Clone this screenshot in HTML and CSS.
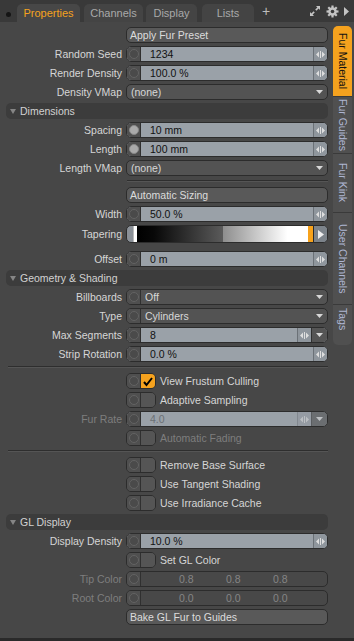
FILE: index.html
```html
<!DOCTYPE html>
<html lang="en">
<head>
  <meta charset="UTF-8">
  <title>Fur Material Properties</title>
  <link rel="stylesheet" href="styles.css">
</head>
<body>
  <!-- tab bar -->
  <div class="topbar">
    <span class="dot"></span>
    <div class="tab active w-prop">Properties</div>
    <div class="tab w-chan">Channels</div>
    <div class="tab w-disp">Display</div>
    <div class="tab w-list">Lists</div>
    <span class="plus">+</span>
    <div class="tools">
      <svg width="12" height="12" viewBox="0 0 12 12">
        <path d="M7 1 H11 V5 L9.6 3.6 L7.4 5.8 L6.2 4.6 L8.4 2.4 Z" fill="#c4c4c4"/>
        <path d="M5 11 H1 V7 L2.4 8.4 L4.6 6.2 L5.8 7.4 L3.6 9.6 Z" fill="#c4c4c4"/>
      </svg>
      <svg width="13" height="13" viewBox="0 0 13 13">
        <g fill="#c4c4c4">
          <circle cx="6.5" cy="6.5" r="4.3"/>
          <rect x="5.4" y="0.5" width="2.2" height="12"/>
          <rect x="0.5" y="5.4" width="12" height="2.2"/>
          <rect x="5.4" y="0.5" width="2.2" height="12" transform="rotate(45 6.5 6.5)"/>
          <rect x="5.4" y="0.5" width="2.2" height="12" transform="rotate(-45 6.5 6.5)"/>
        </g>
        <circle cx="6.5" cy="6.5" r="1.8" fill="#3a3a3a"/>
      </svg>
      <svg width="6" height="9" viewBox="0 0 6 9"><path d="M0 0 L5 4.5 L0 9 Z" fill="#c4c4c4"/></svg>
    </div>
  </div>

  <div class="main">
    <div class="form">
      <div class="row"><span class="lbl"></span><div class="btn">Apply Fur Preset</div></div>

      <div class="row"><span class="lbl">Random Seed</span>
        <div class="ctl"><span class="knob"><i></i></span><span class="val">1234</span><span class="spin"></span></div></div>
      <div class="row"><span class="lbl">Render Density</span>
        <div class="ctl"><span class="knob"><i></i></span><span class="val">100.0 %</span><span class="spin"></span></div></div>
      <div class="row"><span class="lbl">Density VMap</span>
        <div class="ctl pop"><span class="txt">(none)</span><span class="arr"></span></div></div>

      <div class="head"><span class="tri"></span>Dimensions</div>

      <div class="row"><span class="lbl">Spacing</span>
        <div class="ctl"><span class="knob on"><i></i></span><span class="val">10 mm</span><span class="spin"></span></div></div>
      <div class="row"><span class="lbl">Length</span>
        <div class="ctl"><span class="knob on"><i></i></span><span class="val">100 mm</span><span class="spin"></span></div></div>
      <div class="row"><span class="lbl">Length VMap</span>
        <div class="ctl pop"><span class="txt">(none)</span><span class="arr"></span></div></div>
      <div class="sep short"></div>
      <div class="row"><span class="lbl"></span><div class="btn">Automatic Sizing</div></div>
      <div class="row"><span class="lbl">Width</span>
        <div class="ctl"><span class="knob"><i></i></span><span class="val">50.0 %</span><span class="spin"></span></div></div>
      <div class="row tall"><span class="lbl">Tapering</span>
        <div class="grad">
          <span class="cap"></span><span class="mark"></span>
          <span class="ramp"></span>
          <span class="omark"></span>
          <span class="play"></span>
        </div></div>
      <div class="row"><span class="lbl">Offset</span>
        <div class="ctl"><span class="knob"><i></i></span><span class="val">0 m</span><span class="spin"></span></div></div>

      <div class="head"><span class="tri"></span>Geometry &amp; Shading</div>

      <div class="row"><span class="lbl">Billboards</span>
        <div class="ctl pop"><span class="knob"><i></i></span><span class="txt">Off</span><span class="arr"></span></div></div>
      <div class="row"><span class="lbl">Type</span>
        <div class="ctl pop"><span class="knob"><i></i></span><span class="txt">Cylinders</span><span class="arr"></span></div></div>
      <div class="row"><span class="lbl">Max Segments</span>
        <div class="ctl"><span class="knob"><i></i></span><span class="val">8</span><span class="spin"></span><span class="drop"></span></div></div>
      <div class="row"><span class="lbl">Strip Rotation</span>
        <div class="ctl"><span class="knob"><i></i></span><span class="val">0.0 %</span><span class="spin"></span></div></div>
      <div class="sep"></div>

      <div class="row"><span class="lbl"></span>
        <div class="chk"><span class="knob"><i></i></span><span class="box on"></span></div><span class="ctext">View Frustum Culling</span></div>
      <div class="row"><span class="lbl"></span>
        <div class="chk"><span class="knob"><i></i></span><span class="box"></span></div><span class="ctext">Adaptive Sampling</span></div>
      <div class="row off"><span class="lbl">Fur Rate</span>
        <div class="ctl"><span class="knob"><i></i></span><span class="val">4.0</span><span class="spin"></span><span class="drop"></span></div></div>
      <div class="row off"><span class="lbl"></span>
        <div class="chk"><span class="knob"><i></i></span><span class="box"></span></div><span class="ctext">Automatic Fading</span></div>
      <div class="sep"></div>

      <div class="row"><span class="lbl"></span>
        <div class="chk"><span class="knob"><i></i></span><span class="box"></span></div><span class="ctext">Remove Base Surface</span></div>
      <div class="row"><span class="lbl"></span>
        <div class="chk"><span class="knob"><i></i></span><span class="box"></span></div><span class="ctext">Use Tangent Shading</span></div>
      <div class="row"><span class="lbl"></span>
        <div class="chk"><span class="knob"><i></i></span><span class="box"></span></div><span class="ctext">Use Irradiance Cache</span></div>

      <div class="head"><span class="tri"></span>GL Display</div>

      <div class="row"><span class="lbl">Display Density</span>
        <div class="ctl"><span class="knob"><i></i></span><span class="val">10.0 %</span><span class="spin"></span></div></div>
      <div class="row"><span class="lbl"></span>
        <div class="chk"><span class="knob"><i></i></span><span class="box"></span></div><span class="ctext">Set GL Color</span></div>
      <div class="row off"><span class="lbl">Tip Color</span>
        <div class="ctl pop"><span class="knob"><i></i></span><span class="rgb"><b>0.8</b><b>0.8</b><b>0.8</b></span></div></div>
      <div class="row off"><span class="lbl">Root Color</span>
        <div class="ctl pop"><span class="knob"><i></i></span><span class="rgb"><b>0.0</b><b>0.0</b><b>0.0</b></span></div></div>
      <div class="row"><span class="lbl"></span><div class="btn">Bake GL Fur to Guides</div></div>
    </div>

    <!-- side tabs -->
    <div class="side">
      <div class="stab active t-mat">Fur Material</div>
      <div class="stab t-gui">Fur Guides</div>
      <div class="stab t-kink">Fur Kink</div>
      <div class="stab t-user">User Channels</div>
      <div class="stab t-tags">Tags</div>
    </div>
  </div>
  <div class="bottom"></div>
</body>
</html>
```

FILE: styles.css
```css
* {
  box-sizing: border-box;
}

body {
  margin: 0;
  width: 354px;
  height: 641px;
  overflow: hidden;
  background: #2c2c2c;
  font-family: "Liberation Sans", Arial, sans-serif;
  font-size: 10.5px;
  color: #d6d6d6;
}

/* top tab bar */
.topbar {
  height: 22px;
  background: #393939;
  display: flex;
  align-items: flex-end;
  padding-left: 6px;
}

.dot {
  align-self: center;
  margin-top: 6px;
  width: 5px;
  height: 5px;
  border-radius: 50%;
  background: #151515;
  margin-right: 6px;
}

.tab {
  height: 18px;
  margin-right: 4px;
  border-radius: 5px 5px 0 0;
  background: #444;
  color: #a9a9a9;
  font-size: 11px;
  display: flex;
  align-items: center;
  justify-content: center;
}

.tab.active {
  background: #474747;
  color: #f5a21e;
}

.w-prop { width: 63px; }
.w-chan { width: 59px; margin-right: 3px; }
.w-disp { width: 51px; margin-right: 5px; }
.w-list { width: 52px; }

.plus {
  align-self: center;
  margin-left: 4px;
  color: #bdbdbd;
  font-size: 14px;
  line-height: 14px;
}

.tools {
  align-self: center;
  margin-left: auto;
  display: flex;
  align-items: center;
  gap: 5px;
  padding-right: 4px;
}

/* main panel */
.main {
  height: 616px;
  background: #474747;
  display: flex;
}

.form {
  width: 331px;
  padding: 5px 3px 0 0;
  display: flex;
  flex-direction: column;
  gap: 3px;
}

.row {
  height: 16px;
  display: flex;
  align-items: center;
}

.row.tall {
  height: 18px;
  margin-bottom: 5px;
}

.lbl {
  width: 123px;
  flex: none;
  text-align: right;
  padding-right: 1px;
  margin-right: 3px;
  white-space: nowrap;
}

.off .lbl,
.off .ctext {
  color: #7e7e7e;
}

/* section headers */
.head {
  height: 16px;
  margin-left: 6px;
  background: #3c3c3c;
  border-radius: 5px;
  display: flex;
  align-items: center;
  padding-left: 4px;
  color: #d2d2d2;
}

.tri {
  width: 0;
  height: 0;
  border-left: 3.5px solid transparent;
  border-right: 3.5px solid transparent;
  border-top: 5px solid #858585;
  margin-right: 4px;
}

.sep {
  margin: 1px 0 2px 8px;
  background: #2e2e2e;
  border-bottom: 1px solid #555;
  height: 2px;
}

.sep.short {
  margin-left: 127px;
}

/* fields */
.ctl {
  flex: 1;
  height: 16px;
  display: flex;
  border: 1px solid #2c2c2c;
  border-radius: 5px;
  overflow: hidden;
  background: #9aa1a8;
}

.knob {
  width: 14px;
  flex: none;
  background: #4f4f4f;
  border-right: 1px solid #303030;
  display: flex;
  align-items: center;
  justify-content: center;
}

.knob i {
  width: 10px;
  height: 10px;
  border-radius: 50%;
  border: 1px solid #636363;
  background: #4a4a4a;
}

.knob.on i {
  background: #a9a9a9;
  border-color: #888;
}

.val {
  flex: 1;
  padding-left: 9px;
  color: #111;
  line-height: 14px;
}

.off .val {
  color: #6b7075;
}

.spin {
  width: 14px;
  flex: none;
  background: #8f969d;
  border-left: 1px solid #6b7177;
  background-image: url("data:image/svg+xml;utf8,<svg xmlns='http://www.w3.org/2000/svg' width='9' height='9'><path d='M0 4.5 L3 1.5 L3 7.5 Z M9 4.5 L6 1.5 L6 7.5 Z' fill='%23dedede'/><rect x='4' y='1' width='1' height='7' fill='%23dedede'/></svg>");
  background-repeat: no-repeat;
  background-position: center;
}

.off .spin {
  opacity: 0.5;
}

.drop,
.arr {
  width: 16px;
  flex: none;
  background-repeat: no-repeat;
  background-position: center;
  background-image: url("data:image/svg+xml;utf8,<svg xmlns='http://www.w3.org/2000/svg' width='7' height='4'><path d='M0 0 L7 0 L3.5 4 Z' fill='%23d8d8d8'/></svg>");
}

.drop {
  background-color: #555;
  border-left: 1px solid #303030;
}

.off .drop {
  background-color: #4e4e4e;
  opacity: 0.6;
}

.ctl.pop {
  background: #535353;
}

.txt {
  flex: 1;
  padding-left: 4px;
  line-height: 14px;
  color: #d8d8d8;
}

.rgb {
  flex: 1;
  display: flex;
  padding-left: 38px;
  line-height: 14px;
}

.rgb b {
  width: 47px;
  font-weight: normal;
  color: #858585;
}

.ctl.pop:has(.rgb) {
  background: #484848;
}

/* buttons */
.btn {
  flex: 1;
  height: 16px;
  background: #595959;
  border: 1px solid #2c2c2c;
  border-radius: 5px;
  padding-left: 3px;
  line-height: 14px;
  color: #dcdcdc;
}

/* checkboxes */
.chk {
  width: 30px;
  height: 16px;
  display: flex;
  border: 1px solid #2c2c2c;
  border-radius: 5px;
  overflow: hidden;
}

.box {
  flex: 1;
  background: #555;
}

.box.on {
  background: #f5a21e url("data:image/svg+xml;utf8,<svg xmlns='http://www.w3.org/2000/svg' width='12' height='12'><path d='M2 7 L4.5 10 L10 3' fill='none' stroke='black' stroke-width='2'/></svg>") no-repeat center;
}

.ctext {
  margin-left: 4px;
  white-space: nowrap;
}

/* tapering gradient */
.grad {
  flex: 1;
  height: 18px;
  display: flex;
  border: 1px solid #2c2c2c;
  border-radius: 5px;
  overflow: hidden;
  background: #8a9097;
}

.cap {
  width: 6px;
}

.mark {
  width: 4px;
  background: #fff;
  border-left: 1px solid #bbb;
}

.ramp {
  flex: 1;
  background: linear-gradient(to right, #000 0%, #080808 10%, #5a5a5a 50%, #8e8e8e 50.5%, #fff 88%, #fff 100%);
}

.omark {
  width: 6px;
  background: #f7a21b;
  border-right: 1px solid #2a2a2a;
}

.play {
  width: 13px;
  background: #7c838a url("data:image/svg+xml;utf8,<svg xmlns='http://www.w3.org/2000/svg' width='6' height='9'><path d='M0 0 L6 4.5 L0 9 Z' fill='%23f0f0f0'/></svg>") no-repeat center;
}

/* side tabs */
.side {
  width: 19px;
  margin: 4px 0 0 2px;
  height: 319px;
  background: #505050;
  border-radius: 5px;
  display: flex;
  flex-direction: column;
}

.stab {
  flex: none;
  width: 19px;
  writing-mode: vertical-rl;
  white-space: nowrap;
  overflow: hidden;
  text-align: center;
  font-size: 10.5px;
  line-height: 18px;
  color: #aeb6d2;
  border-bottom: 1px solid #3a3a3a;
}

.stab.active {
  background: #f5a21e;
  color: #111;
  border-radius: 5px 5px 0 0;
}

.t-mat { height: 71px; }
.t-gui { height: 57px; }
.t-kink { height: 59px; }
.t-user { height: 92px; }
.t-tags { height: 40px; border-bottom: none; text-align: left; padding-top: 3px; }

.bottom {
  height: 3px;
  background: #2a2a2a;
}
```
